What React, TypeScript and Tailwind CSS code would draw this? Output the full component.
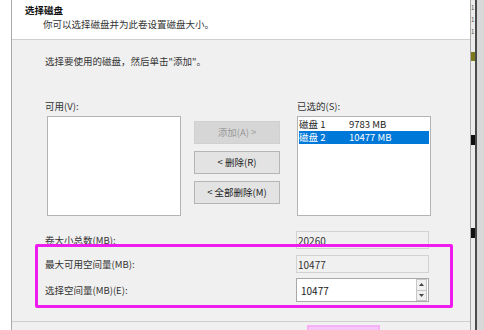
import React from 'react';

const font = { fontFamily: '"Noto Sans CJK SC", "Liberation Sans", sans-serif' };

function ListBox({ children }: { children?: React.ReactNode }) {
  return (
    <div className="w-[134px] h-[100px] bg-white border border-[#b4b4b4] px-px">{children}</div>
  );
}

function Btn({ label, disabled }: { label: string; disabled?: boolean }) {
  return (
    <div
      className={
        disabled
          ? 'h-[23px] w-[86px] flex items-center justify-center bg-[#d6d6d6] text-[#9a9a9a] border border-[#d0d0d0]'
          : 'h-[23px] w-[86px] flex items-center justify-center bg-[#e3e3e3] text-[#222] border border-[#b5b5b5]'
      }
    >
      {label}
    </div>
  );
}

export default function App() {
  return (
    <div className="relative flex w-[484px] h-[330px] overflow-hidden bg-white text-[9.5px] text-[#222]" style={font}>
      <div className="w-[11px] shrink-0 bg-white" />

      {/* dialog */}
      <div className="w-[460px] shrink-0 flex flex-col border-l border-r border-[#a8a8a8]">
        <div className="h-[40px] shrink-0 bg-white border-b border-[#cfcfcf] pl-[13px] pt-[4px]">
          <div className="font-bold leading-[12px] text-[#111]">选择磁盘</div>
          <div className="pl-[18px] leading-[12px] mt-[2px] text-[#333]">你可以选择磁盘并为此卷设置磁盘大小。</div>
        </div>

        <div className="flex-1 bg-[#f0f0f0] pl-[33px] flex flex-col">
          <div className="mt-[14px] leading-[14px] text-[#333]">选择要使用的磁盘，然后单击"添加"。</div>

          <div className="flex mt-[31px] leading-[14px] text-[#333]">
            <div className="w-[252px]">可用(V):</div>
            <div>已选的(S):</div>
          </div>

          <div className="flex mt-[3px] ml-[2px]">
            <ListBox />
            <div className="flex flex-col gap-[7px] ml-[13px] mt-[5px]">
              <Btn label="添加(A) >" disabled />
              <Btn label="< 删除(R)" />
              <Btn label="< 全部删除(M)" />
            </div>
            <div className="ml-[17px]">
              <ListBox>
                <div className="flex h-[14px] items-center leading-[14px] text-[9.5px] text-[#222]">
                  <span className="w-[50px]">磁盘 1</span>
                  <span>9783 MB</span>
                </div>
                <div className="flex h-[13px] items-center leading-[13px] text-[9.5px] bg-[#0078d7] text-white">
                  <span className="w-[50px]">磁盘 2</span>
                  <span>10477 MB</span>
                </div>
              </ListBox>
            </div>
          </div>

          <div className="flex items-center mt-[15px] h-[18px]">
            <div className="w-[251px] text-[#333]">卷大小总数(MB):</div>
            <div className="w-[133px] h-[18px] border border-[#d2d2d2] pl-[1px] flex items-center text-[10px] text-[#333]">20260</div>
          </div>
          <div className="flex items-center mt-[6px] h-[18px]">
            <div className="w-[251px] text-[#333]">最大可用空间量(MB):</div>
            <div className="w-[133px] h-[18px] border border-[#d2d2d2] pl-[1px] flex items-center text-[10px] text-[#333]">10477</div>
          </div>
          <div className="flex items-center mt-[5px] h-[24px]">
            <div className="w-[251px] text-[#333]">选择空间量(MB)(E):</div>
            <div className="w-[133px] h-[24px] border border-[#a9a9a9] bg-white flex items-center">
              <div className="flex-1 pl-[4px] text-[10px] text-[#222]">10477</div>
              <div className="w-[11px] h-[22px] mr-px flex flex-col">
                <div className="flex-1 flex items-center justify-center border border-[#c6c6c6] bg-[#f0f0f0]">
                  <svg width="5" height="3" viewBox="0 0 5 3"><path d="M0 3L2.5 0L5 3Z" fill="#444" /></svg>
                </div>
                <div className="flex-1 flex items-center justify-center border border-t-0 border-[#c6c6c6] bg-[#f0f0f0]">
                  <svg width="5" height="3" viewBox="0 0 5 3"><path d="M0 0L2.5 3L5 0Z" fill="#444" /></svg>
                </div>
              </div>
            </div>
          </div>

          <div className="mt-[19px] -ml-[33px] border-t border-[#cfcfcf] flex-1 flex">
            <div className="ml-[295px] mt-[3px] w-[73px] h-[6px] bg-[#f6c6f6] border-t-2 border-x-2 border-[#f7b0f7]" />
          </div>
        </div>
      </div>

      {/* background behind the dialog */}
      <div className="flex-1 flex">
        <div className="w-[4px] bg-[#ececec] flex flex-col text-[6px] leading-[12px] text-[#555]">
          <span className="mt-[2px]">1</span>
          <span>1</span>
          <span>1</span>
          <div className="mt-[14px] h-[9px] bg-[#7d7a1e]" />
          <div className="mt-[74px] h-[10px] bg-[#111]" />
          <div className="mt-[83px] h-[10px] bg-[#111]" />
        </div>
        <div className="w-[2px] bg-[#4a4a4a]" />
        <div className="flex-1 bg-[#d8d8d8]" />
      </div>

      {/* annotation box */}
      <div className="absolute left-[35px] top-[244px] w-[418px] h-[64px] border-[3px] border-[#ee1cee] rounded-[2px]" />
    </div>
  );
}
